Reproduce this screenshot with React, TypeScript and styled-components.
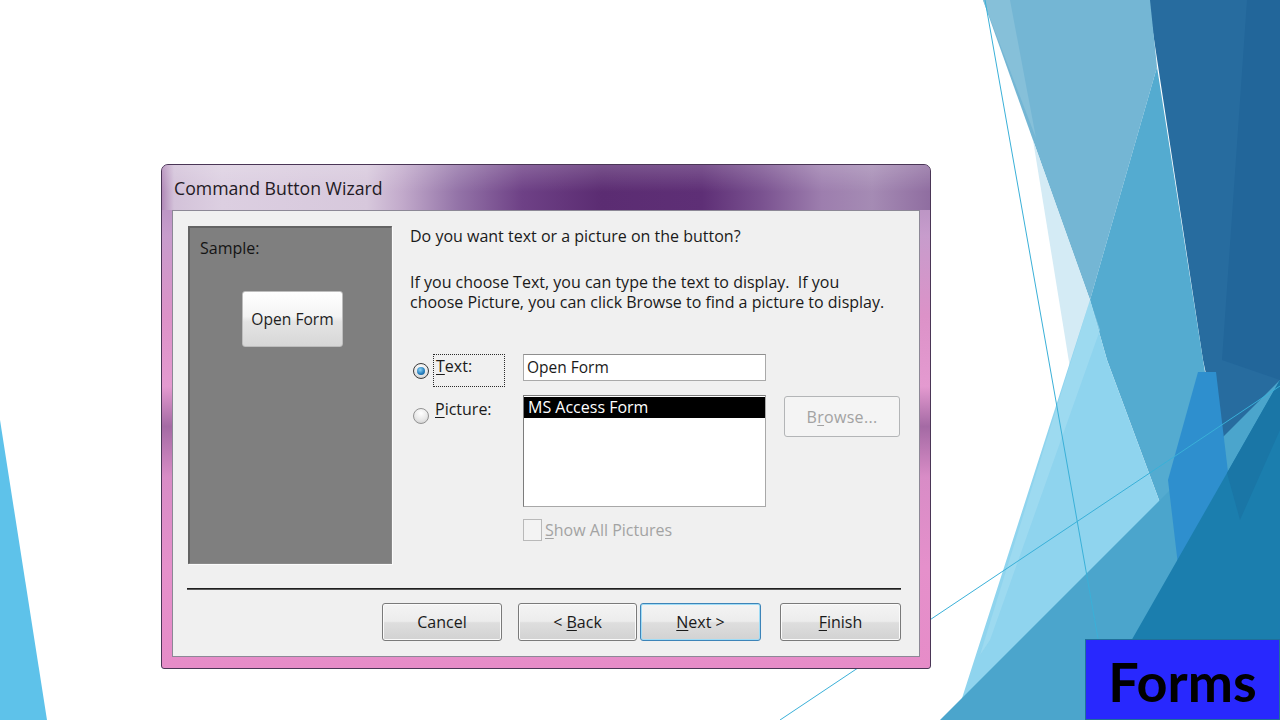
import React from "react";
import styled, { createGlobalStyle, css } from "styled-components";

const Global = createGlobalStyle`
  html, body { margin: 0; padding: 0; background: #ffffff; }
  body { font-family: "Open Sans", "Noto Sans", sans-serif; }
  * { box-sizing: border-box; }
`;

const Slide = styled.div`
  position: relative;
  width: 1280px;
  height: 720px;
  overflow: hidden;
  background: #ffffff;
`;

const Art = styled.svg`
  position: absolute;
  inset: 0;
  width: 1280px;
  height: 720px;
`;

const Stage = styled.div`
  position: relative;
  display: flex;
  padding: 164px 0 0 161px;
`;

const Window = styled.div`
  width: 770px;
  height: 505px;
  display: flex;
  flex-direction: column;
  border: 1px solid #4a3656;
  border-radius: 7px 7px 3px 3px;
  overflow: hidden;
  background: linear-gradient(
    180deg,
    #a98ab8 0%,
    #c79ccc 14%,
    #dc92c8 30%,
    #e49ad0 44%,
    #a46aa4 52%,
    #d88cc6 62%,
    #e590cb 80%,
    #e68cc8 100%
  );
`;

const TitleBar = styled.div`
  height: 45px;
  flex: none;
  display: flex;
  align-items: center;
  padding: 0 0 0 12px;
  font-size: 17.7px;
  color: #1f1a24;
  background:
    linear-gradient(180deg, rgba(255,255,255,0.18) 0%, rgba(255,255,255,0) 60%),
    linear-gradient(
      90deg,
      #b18ab8 0px,
      #d3c2d9 12px,
      #dccfe1 60px,
      #d7c8dc 205px,
      #c2aacb 240px,
      #9474a8 295px,
      #6e4186 360px,
      #5b2c72 440px,
      #5e2f76 540px,
      #7a5290 600px,
      #9d7eae 660px,
      #a58bb4 710px,
      #8f6da0 769px
    );
`;

const Client = styled.div`
  flex: 1;
  margin: 0 10px 11px 10px;
  background: #f0f0f0;
  border: 1px solid #8c8896;
  display: flex;
  flex-direction: column;
  padding: 15px 18px 0 15px;
  font-size: 16px;
  color: #1a1a1a;
`;

const TopRow = styled.div`
  display: flex;
  gap: 18px;
  height: 338px;
`;

const SamplePanel = styled.div`
  width: 204px;
  height: 338px;
  flex: none;
  background: #7f7f7f;
  border-top: 2px solid #636363;
  border-left: 2px solid #636363;
  border-right: 1px solid #8a8a8a;
  border-bottom: 1px solid #8a8a8a;
  box-shadow: 1px 1px 0 #fbfbfb;
  display: flex;
  flex-direction: column;
  padding: 10px 0 0 10px;
`;

const SampleLabel = styled.div`
  line-height: 20px;
  color: #141414;
`;

const SampleButton = styled.div`
  margin: 33px 0 0 42px;
  width: 101px;
  height: 56px;
  display: flex;
  align-items: center;
  justify-content: center;
  font-size: 15.6px;
  color: #1e1e1e;
  border: 1px solid #bdbdbd;
  border-radius: 3px;
  background: linear-gradient(180deg, #ffffff 0%, #f4f4f4 45%, #e4e4e4 55%, #d7d7d7 100%);
`;

const Main = styled.div`
  flex: 1;
  display: flex;
  flex-direction: column;
  padding-top: 0;
`;

const Question = styled.div`
  line-height: 20px;
`;

const Paragraph = styled.div`
  margin-top: 26px;
  line-height: 20px;
`;

const Options = styled.div`
  margin-top: 42px;
  display: grid;
  grid-template-columns: 113px 243px 134px;
  grid-template-rows: 33px 112px 26px;
  row-gap: 8px;
  & > :nth-child(3n) { margin-left: 18px; }
`;

const Choice = styled.div<{ $top: number }>`
  display: flex;
  align-items: flex-start;
  gap: 4px;
  padding-left: 3px;
  & > span:first-child { margin-top: ${(p) => p.$top}px; }
`;

const Radio = styled.span<{ $checked?: boolean }>`
  position: relative;
  flex: none;
  width: 16px;
  height: 16px;
  border-radius: 50%;
  border: 1px solid ${(p) => (p.$checked ? "#3a3a3a" : "#939393")};
  background: radial-gradient(circle at 50% 30%, #ffffff 0%, #e8e8e8 55%, #c8c8c8 100%);
  ${(p) =>
    p.$checked &&
    css`
      &::after {
        content: "";
        position: absolute;
        inset: 3px;
        border-radius: 50%;
        background: radial-gradient(circle at 40% 35%, #8fd4f6 0%, #2a82c0 55%, #0f4c80 100%);
      }
    `}
`;

const ChoiceText = styled.span<{ $focus?: boolean; $top: number }>`
  padding: ${(p) => p.$top}px 0 0 2px;
  line-height: 20px;
  ${(p) =>
    p.$focus &&
    css`
      width: 72px;
      height: 33px;
      border: 1px dotted #2a2a2a;
    `}
`;

const Key = styled.span`
  text-decoration: underline;
  text-underline-offset: 2px;
`;

const TextBox = styled.div`
  height: 27px;
  border: 1px solid #a9a9a9;
  border-top-color: #8e8e8e;
  background: #ffffff;
  padding-left: 3px;
  line-height: 25px;
  font-size: 15.5px;
`;

const ListBox = styled.div`
  border: 1px solid #7c7c7c;
  border-right-color: #a8a8a8;
  border-bottom-color: #a8a8a8;
  background: #ffffff;
  padding: 1px 0 0 0;
`;

const ListItem = styled.div<{ $selected?: boolean }>`
  height: 21px;
  line-height: 21px;
  padding-left: 4px;
  background: ${(p) => (p.$selected ? "#000000" : "transparent")};
  color: ${(p) => (p.$selected ? "#ffffff" : "#1a1a1a")};
`;

const SideButton = styled.div`
  margin-top: 1px;
  height: 41px;
  display: flex;
  align-items: center;
  justify-content: center;
  border: 1px solid #b3b5b7;
  border-radius: 3px;
  background: #f4f4f4;
  color: #a2a2a2;
  letter-spacing: 0.3px;
`;

const Empty = styled.div``;

const CheckRow = styled.div`
  margin-top: 4px;
  display: flex;
  align-items: center;
  gap: 3px;
  color: #a3a3a3;
  white-space: nowrap;
`;

const CheckBox = styled.span`
  width: 19px;
  height: 22px;
  flex: none;
  border: 1px solid #b9b9b9;
  background: #f3f3f3;
`;

const Separator = styled.div`
  margin: 24px 0 0 -1px;
  height: 2px;
  background: #1f1f1f;
  border-bottom: 1px solid #5a5a5a;
`;

const ButtonRow = styled.div`
  margin-top: 13px;
  display: flex;
  justify-content: flex-end;
`;

const DlgButton = styled.button<{ $w: number; $gap: number; $default?: boolean }>`
  width: ${(p) => p.$w}px;
  height: 38px;
  margin-left: ${(p) => p.$gap}px;
  padding: 0;
  font-family: "Open Sans", "Noto Sans", sans-serif;
  font-size: 16px;
  color: #1a1a1a;
  border-radius: 3px;
  border: 1px solid ${(p) => (p.$default ? "#3d84b8" : "#7a7a7a")};
  background: linear-gradient(180deg, #f4f4f4 0%, #ececec 48%, #dedede 52%, #d2d2d2 100%);
  box-shadow: inset 0 0 0 1px ${(p) => (p.$default ? "#9fdcf6" : "#fbfbfb")};
`;

const FormsTag = styled.div`
  position: absolute;
  right: 0;
  bottom: 0;
  width: 195px;
  height: 81px;
  display: flex;
  align-items: center;
  justify-content: center;
  background: #2828fe;
  border: 1px solid #1f6f9a;
  font-family: Lato, "Open Sans", sans-serif;
  font-weight: 700;
  font-size: 54px;
  color: #000000;
  padding-top: 4px;
`;

function Background() {
  return (
    <Art viewBox="0 0 1280 720" aria-hidden="true">
      <polygon points="0,420 47,720 0,720" fill="#5ec2ea" />
      <polygon points="1148,0 1280,0 1280,720 1240,720 1228,475 1203,360" fill="#276c9f" />
      <polygon points="1247,0 1280,0 1280,380 1222,360" fill="#22669a" />
      <polygon points="983,0 1150,0 1157,67 1090,300" fill="#74b6d4" />
      <polygon points="983,0 1010,0 1036,138" fill="#86c0d9" />
      <polygon points="1033,140 1090,300 1070,368" fill="#d4ebf5" />
      <polygon points="1157,67 1203,360 1218,450 1172,535 1107,360 1090,300" fill="#54abd0" />
      <polygon points="1090,300 1107,360 1172,535 1150,720 955,720" fill="#8fd4ee" />
      <polygon points="1090,300 1100,330 990,640 980,655" fill="#a6ddf2" opacity="0.6" />
      <polygon points="940,720 1280,380 1280,720" fill="#4ba5cc" />
      <polygon points="1198,372 1216,372 1228,472 1178,565 1168,480" fill="#2e8fce" />
      <polygon points="1086,720 1227,473 1280,380 1280,720" fill="#1b7eae" />
      <polygon points="1227,473 1280,380 1280,430 1240,520" fill="#1a76a6" />
      <line x1="985" y1="0" x2="1100" y2="650" stroke="#3ab0d8" strokeWidth="1" />
      <line x1="780" y1="720" x2="1280" y2="386" stroke="#3ab0d8" strokeWidth="1" />
    </Art>
  );
}

export default function App() {
  return (
    <>
      <Global />
      <Slide>
        <Background />
        <Stage>
          <Window>
            <TitleBar>Command Button Wizard</TitleBar>
            <Client>
              <TopRow>
                <SamplePanel>
                  <SampleLabel>Sample:</SampleLabel>
                  <SampleButton>Open Form</SampleButton>
                </SamplePanel>
                <Main>
                  <Question>Do you want text or a picture on the button?</Question>
                  <Paragraph>
                    If you choose Text, you can type the text to display.&nbsp; If you
                    <br />
                    choose Picture, you can click Browse to find a picture to display.
                  </Paragraph>
                  <Options>
                    <Choice $top={9}>
                      <Radio $checked />
                      <ChoiceText $focus $top={1}>
                        <Key>T</Key>ext:
                      </ChoiceText>
                    </Choice>
                    <TextBox>Open Form</TextBox>
                    <Empty />
                    <Choice $top={13}>
                      <Radio />
                      <ChoiceText $top={4}>
                        <Key>P</Key>icture:
                      </ChoiceText>
                    </Choice>
                    <ListBox>
                      <ListItem $selected>MS Access Form</ListItem>
                    </ListBox>
                    <SideButton>
                      B<Key>r</Key>owse...
                    </SideButton>
                    <Empty />
                    <CheckRow>
                      <CheckBox />
                      <span>
                        <Key>S</Key>how All Pictures
                      </span>
                    </CheckRow>
                    <Empty />
                  </Options>
                </Main>
              </TopRow>
              <Separator />
              <ButtonRow>
                <DlgButton $w={120} $gap={0}>Cancel</DlgButton>
                <DlgButton $w={119} $gap={16}>
                  &lt; <Key>B</Key>ack
                </DlgButton>
                <DlgButton $w={121} $gap={3} $default>
                  <Key>N</Key>ext &gt;
                </DlgButton>
                <DlgButton $w={121} $gap={19}>
                  <Key>F</Key>inish
                </DlgButton>
              </ButtonRow>
            </Client>
          </Window>
        </Stage>
        <FormsTag>Forms</FormsTag>
      </Slide>
    </>
  );
}
